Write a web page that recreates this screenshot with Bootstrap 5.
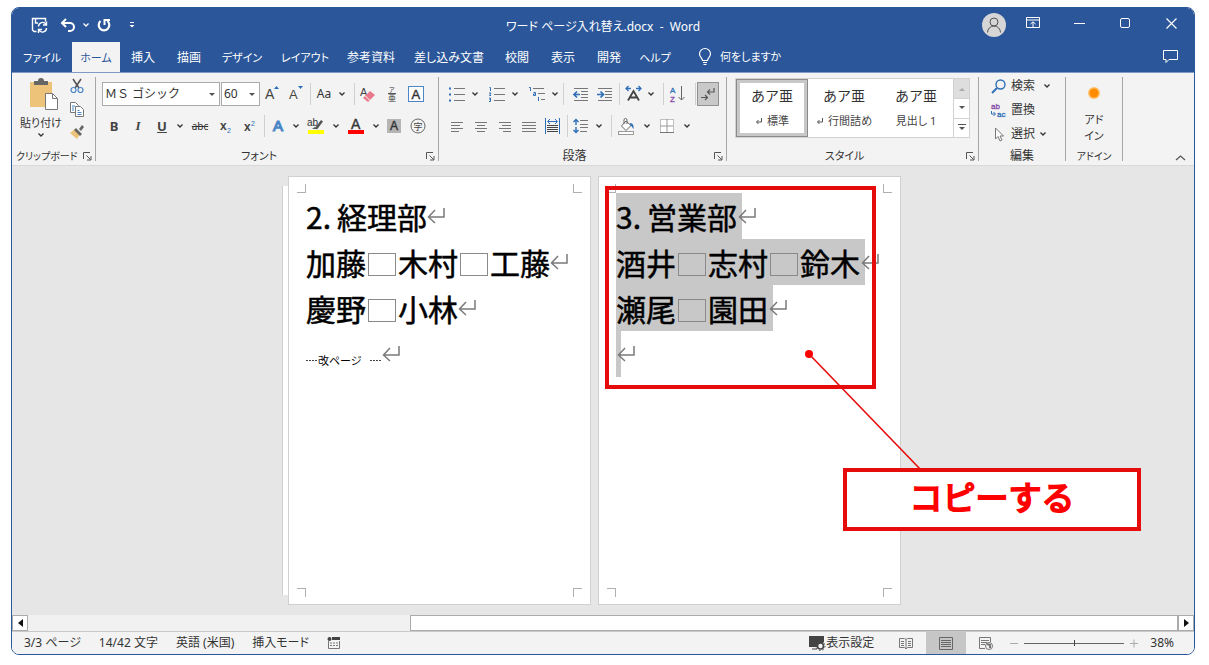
<!DOCTYPE html>
<html lang="ja">
<head>
<meta charset="utf-8">
<meta name="viewport" content="width=device-width, initial-scale=1">
<title>ワード ページ入れ替え.docx - Word</title>
<link href="https://cdn.jsdelivr.net/npm/bootstrap@5.3.0/dist/css/bootstrap.min.css" rel="stylesheet">
<style>
:root{--blue:#2b579a;--accent:#2f6fb7;--ink:#444}
body{background:#fff;font-family:"Noto Sans","Noto Sans CJK JP",sans-serif;font-size:12px;line-height:16px;color:#333;font-feature-settings:"palt";min-height:100vh}
button{background:none;border:0;padding:0;color:inherit;font:inherit;font-feature-settings:inherit}
svg{display:block;flex:none;overflow:visible}
svg text{font-family:"Liberation Sans","Noto Sans CJK JP",sans-serif}
.win{margin:7px 14px 12px 11px;border:1px solid var(--blue);border-radius:8px;overflow:hidden;flex:1;min-width:0}
.titlebar{background:var(--blue);color:#fff;height:34px}
.side{flex:1 1 0}
.avatar{width:24px;height:24px;background:#d6d6d6;border-radius:50%}
.winbtn{width:46px;height:34px}
.tabs{background:var(--blue);height:30px}
.tabs .nav-link{color:#fff;padding:8px 0 6px;width:46px;text-align:center;white-space:nowrap;border-radius:0;line-height:16px}
.tabs .nav-link.t-wide{width:60px}
.tabs .nav-link.t-xl{width:66px}
.tabs .nav-link.t-xxl{width:90px}
.tabs .nav-link.active{background:#f3f3f3;color:var(--blue);width:48px}
.kana{font-size:11px}
.kana-s{font-size:10px}
.ribbon{background:#f3f3f3;height:94px;border-top:1px solid #7f9ac4;border-bottom:1px solid #d9d9d9}
.grp{border-right:1px solid #a6a6a6;margin:4px 0;padding-top:1px;position:relative}
.grp-name{height:10px;line-height:10px;margin-top:auto;text-align:center}
.grp-name.with-launch{padding-right:16px}
.launch{position:absolute;right:3px;bottom:0}
.g-clip{width:84px}.g-font{width:343px}.g-para{width:288px}.g-style{width:252px}.g-edit{width:87px}.g-add{width:57px}
.minis{gap:8px;padding-top:1px}
.trow{height:32px;padding-left:6px}
.ib{width:24px;height:24px;display:flex;align-items:center;justify-content:center;flex:none}
.ib.ibw{width:28px}
.cv{width:12px;height:24px;display:flex;align-items:center;justify-content:center;flex:none}
.vs{width:4px;height:22px;flex:none;background:linear-gradient(#d0d0d0,#d0d0d0) center/1px 100% no-repeat}
.combo{position:relative;height:24px}
.combo::after{content:"";position:absolute;right:5px;top:11px;border:3px solid transparent;border-top-color:#555;border-bottom:0;pointer-events:none}
.combo select{appearance:none;width:100%;height:24px;border:1px solid #ababab;background:#fff;border-radius:0;padding:0 2px;font-size:12px;font-family:inherit;color:#333}
.c-font{width:118px}.c-size{width:39px}
.combos{gap:1px}
.on{background:#c9c9c9;border:1px solid #919191;width:22px}
.lt{font-weight:700;font-size:13px;color:var(--ink);line-height:16px}
.lt.slant{font-family:"Liberation Serif",serif;font-style:italic}
.gallery{background:#fff;border:1px solid #d2d2d2;height:60px}
.sty{width:72px;height:58px;color:#444}
.sty.picked{border:1px solid #8c8c8c;box-shadow:inset 0 0 0 3px #c8c8c8}
.sty b{font:400 14px/18px "Noto Sans CJK JP",sans-serif;color:#333;font-feature-settings:normal}
.sty span{line-height:18px}
.sty span.mt{margin-top:8px}
.gal-scroll{width:16px;border-left:1px solid #d2d2d2}
.gal-scroll button{height:20px;border-top:1px solid #d2d2d2}
.gal-scroll button:first-child{background:#dedede;border-top:0}
.desk{background:#e6e6e6;flex:1;padding:10px 17px 10px 0;gap:7px;overflow:hidden}
.sheet{width:303px;min-height:429px;background:#fff;outline:1px solid #d0d0d0;outline-offset:-1px;position:relative;padding:17px 0 0 18px;font:400 30px/46px "Noto Sans CJK JP",sans-serif;font-feature-settings:normal;color:#000}
.sheet.back::before{content:"";position:absolute;left:-6px;top:10px;bottom:10px;width:6px;background:#fff;border-left:1px solid #d0d0d0}
.ln{height:46px;white-space:nowrap;-webkit-text-stroke:.5px #000}
.num{display:inline-block;width:31px}
.fw{display:inline-block;width:28px;height:23px;border:1px solid #8a8a8a;margin:0 2px;vertical-align:-1px}
.sel{background:#c8c8c8;height:46px;padding-right:5px}
.sel + svg{margin-left:-4px}
.crn{position:absolute;width:9px;height:9px;border:0 solid #b0b0b0}
.c-tl{left:9px;top:8px;border-width:0 1px 1px 0}.c-tr{right:9px;top:8px;border-width:0 0 1px 1px}
.c-bl{left:9px;bottom:8px;border-width:1px 1px 0 0}.c-br{right:9px;bottom:8px;border-width:1px 0 0 1px}
.brk{font:11px/16px "Noto Sans CJK JP",sans-serif;font-feature-settings:"palt";padding-top:12px;-webkit-text-stroke:0}
.dash{width:12px;height:1px;background:repeating-linear-gradient(90deg,#444 0 2px,#fff 2px 3px)}
.redbox{position:absolute;left:7px;top:10px;width:271px;height:203px;border:4px solid #e60c0c}
.lead-line{position:absolute;left:205px;top:172px}
.callout{position:absolute;left:245px;top:292px;width:298px;height:63px;border:4px solid #e60c0c;background:#fff;color:#f00;font-size:33px;line-height:48px;text-align:center;-webkit-text-stroke:2px #f00;stroke-linejoin:round;z-index:2}
.hbar{height:17px;background:#f1f1f1;border-bottom:1px solid #c9c9c9}
.hbar button{width:16px;background:#fff;border:1px solid #ababab}
.thumb{background:#fff;border:1px solid #ababab;width:65%}
.status{background:#f3f3f3;height:22px;padding:0 0 0 12px}
.facts{gap:18px}
.status .vw{width:40px;height:22px;display:flex;align-items:center;justify-content:center}
.status .vw.cur{background:#c6c6c6}
.zoom{appearance:none;width:100px;height:12px;background:linear-gradient(#666,#666) center/100% 1px no-repeat;margin:0 6px}
.zoom::-webkit-slider-thumb{appearance:none;width:1px;height:6px;background:#444}
</style>
</head>
<body class="d-flex flex-column">
<svg width="0" height="0" class="position-absolute" aria-hidden="true">
  <symbol id="cv" viewBox="0 0 8 8"><path d="M1.500 2.500 4 5l2.500-2.500" fill="none" stroke="currentColor" stroke-width="1.300"/></symbol>
  <symbol id="la" viewBox="0 0 9 9"><path d="M.5 7V.5H7M3.500 3.500l4 4M8 4v4H4" fill="none" stroke="#555"/></symbol>
  <symbol id="ret" viewBox="0 0 18 18"><path d="M17 1v9H1.500M8 3 1.500 10 8 16" fill="none" stroke="#7a7a7a" stroke-width="1.500"/></symbol>
  <symbol id="rs" viewBox="0 0 8 8"><path d="M6.500 1v4H1.500M3.500 3 1.500 5l2 2" fill="none" stroke="#555"/></symbol>
</svg>
<div class="win d-flex flex-column">
  <header class="titlebar d-flex align-items-center">
    <div class="side d-flex align-items-center">
      <button class="ib ms-3" aria-label="保存"><svg width="18" height="16" fill="none" stroke="#fff" stroke-width="1.400"><path d="M5.500 14.500H3L1.500 13V1.500h13v3M4.500 1.500V6H7"/><path d="M7.500 9.500a4 4 0 0 1 7.500-2M15.500 4.500v3.500H12M15.500 11a4 4 0 0 1-7.500 2M7.500 16v-3.500H11"/></svg></button>
      <button class="ib ms-1" aria-label="元に戻す"><svg width="16" height="14" fill="none" stroke="#fff" stroke-width="2"><path d="M6 1 2 5l4 4M2 5h8a3.500 3.500 0 0 1 0 8H8"/></svg></button>
      <button class="cv" aria-label="元に戻す履歴"><svg width="8" height="8"><use href="#cv"/></svg></button>
      <button class="ib" aria-label="やり直し"><svg width="16" height="15" fill="none" stroke="#fff" stroke-width="2.200"><path d="M4.500 3A5.300 5.300 0 1 0 11.500 3"/><path d="M8.500 7V2H14" stroke-width="2"/></svg></button>
      <button class="ib ms-1" aria-label="カスタマイズ"><svg width="8" height="8"><path d="M2 1.500h4" stroke="#fff"/><path d="M1.500 4h5L4 6.500z" fill="#fff"/></svg></button>
    </div>
    <div class="pt-1">ワード ページ入れ替え.docx &nbsp;-&nbsp; Word</div>
    <div class="side d-flex align-items-center justify-content-end">
      <button class="avatar d-flex align-items-center justify-content-center me-1" aria-label="アカウント"><svg width="16" height="18" fill="none" stroke="#555"><circle cx="8" cy="6" r="4"/><path d="M1.500 16.500a6.500 6.500 0 0 1 13 0"/></svg></button>
      <button class="winbtn d-flex align-items-center justify-content-center pb-1" aria-label="リボンの表示"><svg width="14" height="12" fill="none" stroke="#fff"><path d="M.5.5h13v10H.5zM.5 3h13M7 10V5M4.500 7 7 4.800 9.500 7"/></svg></button>
      <button class="winbtn d-flex align-items-center justify-content-center pb-1" aria-label="最小化"><svg width="11" height="11"><path d="M0 5.500h11" stroke="#fff"/></svg></button>
      <button class="winbtn d-flex align-items-center justify-content-center pb-1" aria-label="最大化"><svg width="11" height="11"><rect x=".5" y=".5" width="9" height="9" rx="1.500" fill="none" stroke="#fff"/></svg></button>
      <button class="winbtn d-flex align-items-center justify-content-center pb-1" aria-label="閉じる"><svg width="11" height="11"><path d="M.5.500l10 10m0-10-10 10" stroke="#fff" stroke-width="1.200"/></svg></button>
    </div>
  </header>
  <nav class="tabs nav flex-nowrap align-items-start">
    <a class="nav-link kana t-wide" href="#">ファイル</a>
    <a class="nav-link kana active" href="#">ホーム</a>
    <a class="nav-link" href="#">挿入</a>
    <a class="nav-link" href="#">描画</a>
    <a class="nav-link kana t-wide" href="#">デザイン</a>
    <a class="nav-link kana t-xl" href="#">レイアウト</a>
    <a class="nav-link t-xl" href="#">参考資料</a>
    <a class="nav-link t-xxl" href="#">差し込み文書</a>
    <a class="nav-link" href="#">校閲</a>
    <a class="nav-link" href="#">表示</a>
    <a class="nav-link" href="#">開発</a>
    <a class="nav-link kana" href="#">ヘルプ</a>
    <button class="kana d-flex align-items-center text-white h-100 ms-3 text-nowrap"><svg width="14" height="18" class="ms-1 me-2" fill="none" stroke="#fff" stroke-width="1.200"><path d="M4.500 12.500C4.500 10 1.500 9 1.500 6a5.500 5.500 0 0 1 11 0c0 3-3 4-3 6.500zM5 14.500h4M5.500 16.500h3"/></svg>何をしますか</button>
    <button class="ms-auto h-100 pe-3" aria-label="コメント"><svg width="15" height="14" fill="none" stroke="#fff"><path d="M.5.500h14v9H6l-3 3v-3H.5z"/></svg></button>
  </nav>

  <section class="ribbon d-flex">
    <div class="grp g-clip d-flex flex-column">
      <div class="d-flex">
        <button class="kana ms-2 d-flex flex-column align-items-center text-nowrap">
          <svg width="34" height="33"><rect x="6" y="4" width="22" height="25" fill="#ecc378"/><path d="M10 3h4a3 3 0 0 1 6 0h4v4H10z" fill="#666"/><path d="M21.500 15.500h7l5 5v11h-12z" fill="#fff" stroke="#777"/><path d="M28.500 15.500v5h5" fill="none" stroke="#777"/></svg>
          <span class="pt-1">貼り付け</span><svg width="8" height="8"><use href="#cv"/></svg></button>
        <div class="minis d-flex flex-column ms-2">
          <button class="d-flex" aria-label="切り取り"><svg width="14" height="15" fill="none"><path d="M3 0 9 9M11 0 5 9" stroke="#555" stroke-width="1.600"/><circle cx="3.500" cy="11" r="2.500" stroke="#4a86c6" stroke-width="1.200"/><circle cx="10.500" cy="11" r="2.500" stroke="#4a86c6" stroke-width="1.200"/></svg></button>
          <button class="d-flex" aria-label="コピー"><svg width="14" height="15" fill="#fff" stroke="#777"><path d="M.5.500h5l3 3v7h-8z"/><path d="M5.500 4.500h5l3 3v7h-8z"/><path d="M2 4h3M2 6h2M2 8h2M7.500 8.500h2M7.500 10.500h4M7.500 12.500h4" stroke="#4a86c6"/></svg></button>
          <button class="d-flex" aria-label="書式のコピー"><svg width="14" height="14"><path d="M0 8l5-4 5 5-3 5z" fill="#ecc378"/><path d="M4 5l2-2 6 6-2 2zM9 4l3-4 2 2-3 4z" fill="#666"/></svg></button>
        </div>
      </div>
      <div class="grp-name kana-s text-start ps-1 text-nowrap">クリップボード</div>
      <button class="launch" aria-label="クリップボードの設定"><svg width="9" height="9"><use href="#la"/></svg></button>
    </div>

    <div class="grp g-font d-flex flex-column">
      <div class="trow d-flex align-items-center">
        <div class="combos d-flex">
          <div class="combo c-font"><select aria-label="フォント"><option>ＭＳ ゴシック</option></select></div>
          <div class="combo c-size"><select aria-label="サイズ"><option>60</option></select></div>
        </div>
        <button class="ib" aria-label="拡大"><svg width="16" height="18"><text x="1" y="14" font-size="14" fill="#444">A</text><path d="M10 4l2.500-3L15 4z" fill="#2f6fb7"/></svg></button>
        <button class="ib" aria-label="縮小"><svg width="16" height="18"><text x="1" y="14" font-size="13" fill="#444">A</text><path d="M10 1l2.500 3L15 1z" fill="#2f6fb7"/></svg></button>
        <i class="vs"></i>
        <button class="ib">Aa</button><button class="cv" aria-label="文字種"><svg width="8" height="8"><use href="#cv"/></svg></button>
        <i class="vs ms-1"></i>
        <button class="ib" aria-label="書式クリア"><svg width="16" height="17"><text x="0" y="10" font-size="11" fill="#444">A</text><path d="M3 12l7-7 5 4-7 7z" fill="#e8788a"/><path d="M5.500 10l4.500 4.500" stroke="#fff"/></svg></button>
        <button class="ib" aria-label="ルビ"><svg width="14" height="20"><text x="4" y="8" font-size="6" fill="#333">ア</text><path d="M3 9.500h8" stroke="#555"/><text x="3" y="17" font-size="8" fill="#333">亜</text></svg></button>
        <button class="ib" aria-label="囲み線"><svg width="17" height="17"><rect x=".5" y=".5" width="15" height="15" fill="#fff" stroke="#4a86c6"/><text x="3.500" y="13" font-size="13" fill="#333" stroke="#333" stroke-width=".4">A</text></svg></button>
      </div>
      <div class="trow d-flex align-items-center">
        <button class="ib lt">B</button>
        <button class="ib lt slant">I</button>
        <button class="ib lt text-decoration-underline">U</button><button class="cv" aria-label="下線の種類"><svg width="8" height="8"><use href="#cv"/></svg></button>
        <button class="ib ibw text-decoration-line-through kana-s">abc</button>
        <button class="ib" aria-label="下付き"><svg width="15" height="17"><text x="1" y="12" font-size="12" font-weight="700" fill="#444">x</text><text x="8" y="15" font-size="7" fill="#2f6fb7">2</text></svg></button>
        <button class="ib" aria-label="上付き"><svg width="15" height="17"><text x="1" y="13" font-size="12" font-weight="700" fill="#444">x</text><text x="8" y="8" font-size="7" fill="#2f6fb7">2</text></svg></button>
        <i class="vs"></i>
        <button class="ib" aria-label="文字の効果"><svg width="15" height="18"><text x="2" y="14" font-size="15" fill="#fff" stroke="#4a86c6" stroke-width="1.200">A</text></svg></button><button class="cv" aria-label="効果の種類"><svg width="8" height="8"><use href="#cv"/></svg></button>
        <button class="ib ibw" aria-label="蛍光ペン"><svg width="18" height="18"><text x="0" y="9" font-size="10" fill="#333">ab</text><path d="M8 11l6-8 2 1.500-6 8zM5 12l3-2 2 2z" fill="#555"/><rect x="1" y="13" width="16" height="4" fill="#ff0"/></svg></button><button class="cv" aria-label="蛍光ペンの色"><svg width="8" height="8"><use href="#cv"/></svg></button>
        <button class="ib ibw" aria-label="文字の色"><svg width="18" height="18"><text x="4" y="12" font-size="14" fill="#333" stroke="#333" stroke-width=".4">A</text><rect x="1" y="13" width="16" height="4" fill="#f00"/></svg></button><button class="cv" aria-label="色の選択"><svg width="8" height="8"><use href="#cv"/></svg></button>
        <button class="ib" aria-label="網かけ"><svg width="14" height="14"><rect width="14" height="14" fill="#b5b5b5"/><text x="3" y="11" font-size="12" fill="#333" stroke="#333" stroke-width=".4">A</text></svg></button>
        <button class="ib" aria-label="囲い文字"><svg width="16" height="16"><circle cx="8" cy="8" r="7" fill="none" stroke="#666"/><text x="3.500" y="11.500" font-size="9" fill="#444">字</text></svg></button>
      </div>
      <div class="grp-name with-launch kana">フォント</div>
      <button class="launch" aria-label="フォントの設定"><svg width="9" height="9"><use href="#la"/></svg></button>
    </div>

    <div class="grp g-para d-flex flex-column">
      <div class="trow d-flex align-items-center">
        <button class="ib" aria-label="箇条書き"><svg width="16" height="16"><path d="M5 2.500h11M5 8.500h11M5 14.500h11" stroke="#777"/><path d="M0 1.500h2v2H0zM0 7.500h2v2H0zM0 13.500h2v2H0z" fill="#2f6fb7"/></svg></button><button class="cv me-1" aria-label="行頭文字"><svg width="8" height="8"><use href="#cv"/></svg></button>
        <button class="ib" aria-label="段落番号"><svg width="16" height="16"><path d="M5 2.500h11M5 8.500h11M5 14.500h11" stroke="#777"/><path d="M.5 1.500h1V5M0 7h2L.5 9.500H2M0 12h1.500v3.500H0M.5 13.500h1" stroke="#2f6fb7" fill="none"/></svg></button><button class="cv me-1" aria-label="番号の種類"><svg width="8" height="8"><use href="#cv"/></svg></button>
        <button class="ib" aria-label="アウトライン"><svg width="16" height="16"><path d="M4 2.500h11M9 7.500h7M12 13.500h4" stroke="#777"/><path d="M0 1.500h1.500V5M4.500 6.500h2v3h-2V8h2M9.500 11v4" stroke="#2f6fb7" fill="none"/></svg></button><button class="cv" aria-label="リストの種類"><svg width="8" height="8"><use href="#cv"/></svg></button>
        <i class="vs me-1"></i>
        <button class="ib" aria-label="インデントを減らす"><svg width="16" height="14"><path d="M1 1.500h14M8 4.500h7M8 7.500h7M8 10.500h7M1 13.500h14" stroke="#777"/><path d="M7 7.500H1.500M4 4.500l-3 3 3 3" stroke="#2f6fb7" stroke-width="1.700" fill="none"/></svg></button>
        <button class="ib" aria-label="インデントを増やす"><svg width="16" height="14"><path d="M1 1.500h14M8 4.500h7M8 7.500h7M8 10.500h7M1 13.500h14" stroke="#777"/><path d="M0 7.500h6M3.500 4.500l3 3-3 3" stroke="#2f6fb7" stroke-width="1.700" fill="none"/></svg></button>
        <i class="vs"></i>
        <button class="ib" aria-label="拡張書式"><svg width="17" height="16"><path d="M3 14.500 8.500 5 14 14.500M5 11.500h7" stroke="#444" stroke-width="1.800" fill="none"/><path d="M6 2.500H1M3.500 0 1 2.500 3.500 5M11 2.500h5M13.500 0 16 2.500 13.500 5" stroke="#2f6fb7" stroke-width="1.300" fill="none"/></svg></button><button class="cv" aria-label="書式の選択"><svg width="8" height="8"><use href="#cv"/></svg></button>
        <i class="vs ms-1"></i>
        <button class="ib" aria-label="並べ替え"><svg width="15" height="18"><text x="0" y="8" font-size="8" fill="#2f6fb7" stroke="#2f6fb7" stroke-width=".3">A</text><text x="0" y="17" font-size="8" fill="#8548a8" stroke="#8548a8" stroke-width=".3">Z</text><path d="M11.500 1v14M8.500 12l3 3 3-3" stroke="#666" fill="none"/></svg></button>
        <i class="vs ms-1"></i>
        <button class="ib on" aria-label="編集記号の表示"><svg width="14" height="14"><path d="M13 1v4H7M9 2.500 6.500 5 9 7.500M0 10.500h6M4 8l2.500 2.500L4 13" stroke="#555" fill="none" stroke-width="1.200"/></svg></button>
      </div>
      <div class="trow d-flex align-items-center">
        <button class="ib" aria-label="左揃え"><svg width="12" height="11"><path d="M0 1.500h12M0 4.500h9M0 7.500h12M0 10.500h8" stroke="#777"/></svg></button>
        <button class="ib" aria-label="中央揃え"><svg width="12" height="11"><path d="M0 1.500h12M2 4.500h8M0 7.500h12M2 10.500h8" stroke="#777"/></svg></button>
        <button class="ib" aria-label="右揃え"><svg width="12" height="11"><path d="M0 1.500h12M3 4.500h9M0 7.500h12M4 10.500h8" stroke="#777"/></svg></button>
        <button class="ib" aria-label="両端揃え"><svg width="14" height="11"><path d="M0 1.500h14M0 4.500h14M0 7.500h14M0 10.500h14" stroke="#777"/></svg></button>
        <button class="ib" aria-label="均等割り付け"><svg width="16" height="16"><path d="M.5 0v16M14.500 0v16M3 3.500h9M5 1l-2.500 2.500L5 6M10 1l2.500 2.500L10 6" stroke="#2f6fb7" fill="none"/><path d="M2 7.500h11M2 9.500h11M2 11.500h11M2 13.500h11" stroke="#444"/></svg></button>
        <i class="vs"></i>
        <button class="ib" aria-label="行間"><svg width="16" height="16"><path d="M7 2.500h8M7 6.500h8M7 9.500h8M7 13.500h7" stroke="#777"/><path d="M3 7V1.500M.5 4 3 1.500 5.500 4M3 9v5.500M.5 12 3 14.500 5.500 12" stroke="#2f6fb7" stroke-width="1.400" fill="none"/></svg></button><button class="cv" aria-label="行間の選択"><svg width="8" height="8"><use href="#cv"/></svg></button>
        <i class="vs ms-1"></i>
        <button class="ib ibw" aria-label="塗りつぶし"><svg width="18" height="17"><path d="M8 3 3.500 8l4.500 4.500 5-5zM6 6V2a1.500 1.500 0 0 1 3 0v4" stroke="#666" fill="#fff"/><path d="M12 5c3 0 4 3 3.500 6-1.500-1-1-3-3-3z" fill="#2f6fb7"/><rect x=".5" y="13.500" width="15" height="3" fill="#fff" stroke="#999"/></svg></button><button class="cv" aria-label="塗りつぶしの色"><svg width="8" height="8"><use href="#cv"/></svg></button>
        <button class="ib ibw" aria-label="罫線"><svg width="14" height="14"><rect x=".5" y=".5" width="13" height="13" fill="#fff" stroke="#888" stroke-dasharray="1 1"/><path d="M7 0v13M0 7h13" stroke="#999"/><path d="M0 13.500h14" stroke="#777"/></svg></button><button class="cv" aria-label="罫線の種類"><svg width="8" height="8"><use href="#cv"/></svg></button>
      </div>
      <div class="grp-name with-launch">段落</div>
      <button class="launch" aria-label="段落の設定"><svg width="9" height="9"><use href="#la"/></svg></button>
    </div>

    <div class="grp g-style d-flex flex-column">
      <div class="gallery d-flex ms-2 me-2">
        <button class="sty picked d-flex flex-column align-items-center justify-content-center"><b>あア亜</b><span class="kana mt d-flex align-items-center"><svg width="8" height="8" class="me-1"><use href="#rs"/></svg>標準</span></button>
        <button class="sty d-flex flex-column align-items-center justify-content-center"><b>あア亜</b><span class="kana mt d-flex align-items-center text-nowrap"><svg width="8" height="8" class="me-1"><use href="#rs"/></svg>行間詰め</span></button>
        <button class="sty d-flex flex-column align-items-center justify-content-center"><b>あア亜</b><span class="kana mt text-nowrap">見出し 1</span></button>
        <div class="gal-scroll ms-auto d-flex flex-column">
          <button class="d-flex align-items-center justify-content-center" aria-label="上へ"><svg width="6" height="4"><path d="M0 4l3-3 3 3z" fill="#aaa"/></svg></button>
          <button class="d-flex align-items-center justify-content-center" aria-label="下へ"><svg width="6" height="4"><path d="M0 0h6L3 3z" fill="#555"/></svg></button>
          <button class="d-flex align-items-center justify-content-center" aria-label="その他"><svg width="8" height="8"><path d="M0 .5h8" stroke="#555"/><path d="M1 3h6L4 6z" fill="#555"/></svg></button>
        </div>
      </div>
      <div class="grp-name with-launch kana">スタイル</div>
      <button class="launch" aria-label="スタイルの設定"><svg width="9" height="9"><use href="#la"/></svg></button>
    </div>

    <div class="grp g-edit d-flex flex-column">
      <div class="d-flex flex-column ps-2 gap-2">
        <button class="d-flex align-items-center text-nowrap ps-1"><svg width="16" height="15" class="me-1" fill="none" stroke="#2f6fb7" stroke-width="1.400"><circle cx="9.500" cy="5.500" r="4.500"/><path d="M6 9l-5 5" stroke-width="2"/></svg>検索<svg width="8" height="8" class="ms-2"><use href="#cv"/></svg></button>
        <button class="d-flex align-items-center text-nowrap ps-1"><svg width="16" height="16" class="me-1"><text x="0" y="7" font-size="8" fill="#8548a8" stroke="#8548a8" stroke-width=".3">ab</text><text x="6" y="15" font-size="8" fill="#2f6fb7" stroke="#2f6fb7" stroke-width=".3">ac</text><path d="M.5 9v3H4M2.500 10l2 2-2 2" stroke="#2f6fb7" fill="none"/></svg>置換</button>
        <button class="d-flex align-items-center text-nowrap ps-1"><svg width="16" height="15" class="me-1"><path d="M4.500 1v11l2.500-2.500L9 14l2-1-2-4h3.500z" fill="#fff" stroke="#777"/></svg>選択<svg width="8" height="8" class="ms-1"><use href="#cv"/></svg></button>
      </div>
      <div class="grp-name">編集</div>
    </div>
    <div class="grp g-add d-flex flex-column">
      <button class="d-flex flex-column align-items-center pt-2"><svg width="14" height="14" class="mb-2"><circle cx="7" cy="7" r="6" fill="#ffc069"/><circle cx="7" cy="7" r="4.500" fill="#ff8c00"/></svg><span class="kana pt-1">アド<br>イン</span></button>
      <div class="grp-name kana-s">アドイン</div>
    </div>
    <button class="ms-auto align-self-end pe-2 pb-1" aria-label="リボンを折りたたむ"><svg width="11" height="6"><path d="M1 5l4.500-4L10 5" fill="none" stroke="#555" stroke-width="1.200"/></svg></button>
  </section>

  <main class="desk d-flex justify-content-center align-items-start">
    <article class="sheet back">
      <i class="crn c-tl"></i><i class="crn c-tr"></i><i class="crn c-bl"></i><i class="crn c-br"></i>
      <div class="ln d-flex align-items-center"><span><span class="num">2.</span>経理部</span><svg width="18" height="18"><use href="#ret"/></svg></div>
      <div class="ln d-flex align-items-center"><span>加藤<i class="fw"></i>木村<i class="fw"></i>工藤</span><svg width="18" height="18"><use href="#ret"/></svg></div>
      <div class="ln d-flex align-items-center"><span>慶野<i class="fw"></i>小林</span><svg width="18" height="18"><use href="#ret"/></svg></div>
      <div class="ln d-flex align-items-center"><span class="brk d-flex align-items-center"><i class="dash"></i><span class="me-2">改ページ</span><i class="dash"></i></span><svg width="18" height="18"><use href="#ret"/></svg></div>
    </article>
    <article class="sheet">
      <i class="crn c-tl"></i><i class="crn c-tr"></i><i class="crn c-bl"></i><i class="crn c-br"></i>
      <div class="ln d-flex align-items-center"><span class="sel"><span class="num">3.</span>営業部</span><svg width="18" height="18"><use href="#ret"/></svg></div>
      <div class="ln d-flex align-items-center"><span class="sel">酒井<i class="fw"></i>志村<i class="fw"></i>鈴木</span><svg width="18" height="18"><use href="#ret"/></svg></div>
      <div class="ln d-flex align-items-center"><span class="sel">瀬尾<i class="fw"></i>園田</span><svg width="18" height="18"><use href="#ret"/></svg></div>
      <div class="ln d-flex align-items-center"><span class="sel"></span><svg width="18" height="18"><use href="#ret"/></svg></div>
      <div class="redbox"></div>
      <svg class="lead-line" width="120" height="122"><circle cx="6" cy="6" r="4" fill="#f00"/><path d="M6 6l112 116" stroke="#e60c0c" stroke-width="1.600"/></svg>
      <div class="callout">コピーする</div>
    </article>
  </main>

  <div class="hbar d-flex">
    <button class="d-flex align-items-center justify-content-center" aria-label="左へ"><svg width="5" height="8"><path d="M5 0v8L0 4z" fill="#111"/></svg></button>
    <div class="thumb ms-auto"></div>
    <button class="d-flex align-items-center justify-content-center" aria-label="右へ"><svg width="5" height="8"><path d="M0 0v8l5-4z" fill="#111"/></svg></button>
  </div>
  <footer class="status d-flex align-items-center text-nowrap">
    <div class="facts d-flex align-items-center">
      <span>3/3 ページ</span><span>14/42 文字</span><span>英語 (米国)</span><span>挿入モード</span>
      <button aria-label="マクロの記録"><svg width="13" height="12"><path d="M1.500 4v7.500h11V4" fill="none" stroke="#777"/><rect x="5" y="0" width="8" height="3" fill="#444"/><circle cx="2.500" cy="2" r="2" fill="#444"/><path d="M3 6h8M3 8.500h8" stroke="#777" stroke-dasharray="2 1"/></svg></button>
    </div>
    <button class="ms-auto d-flex align-items-center me-2"><svg width="17" height="16"><path d="M0 1h15v6l-5 5H0z" fill="#444"/><path d="M3 14h5" stroke="#444"/><circle cx="11.500" cy="11" r="3" fill="#f3f3f3" stroke="#444" stroke-width="1.600"/><circle cx="11.500" cy="11" r="4.500" fill="none" stroke="#444" stroke-dasharray="1.500 2"/></svg>表示設定</button>
    <button class="vw ms-1" aria-label="閲覧モード"><svg width="14" height="13" fill="none" stroke="#777"><path d="M.5 1.500h5L7 2.500l1.500-1h5v9h-5L7 12l-1.500-1.500h-5zM7 2.500V12M2 4.500h3M2 6.500h3M2 8.500h3M9 4.500h3M9 6.500h3M9 8.500h3"/></svg></button>
    <button class="vw cur" aria-label="印刷レイアウト"><svg width="14" height="13" fill="none" stroke="#666"><path d="M.5.500h13v12H.5zM2 3.500h10M2 5.500h10M2 7.500h10M2 9.500h10"/></svg></button>
    <button class="vw" aria-label="Web レイアウト"><svg width="14" height="13" fill="none" stroke="#777"><path d="M6 11.500H.5V.5h11V5M2 3.500h8M2 5.500h6M2 7.500h4"/><circle cx="10" cy="9" r="3.500" fill="#f3f3f3"/><path d="M8 7l3 1v3" stroke-width="2"/></svg></button>
    <button aria-label="縮小" class="ms-1"><svg width="8" height="9"><path d="M0 4.500h8" stroke="#aaa"/></svg></button>
    <input type="range" class="zoom" min="0" max="100" value="50" aria-label="ズーム">
    <button aria-label="拡大"><svg width="8" height="9"><path d="M0 4.500h8M4 .5v8" stroke="#aaa"/></svg></button>
    <span class="ms-2 ps-1 me-3 pe-1">38%</span>
  </footer>
</div>
<script src="https://cdn.jsdelivr.net/npm/bootstrap@5.3.0/dist/js/bootstrap.bundle.min.js"></script>
</body>
</html>
